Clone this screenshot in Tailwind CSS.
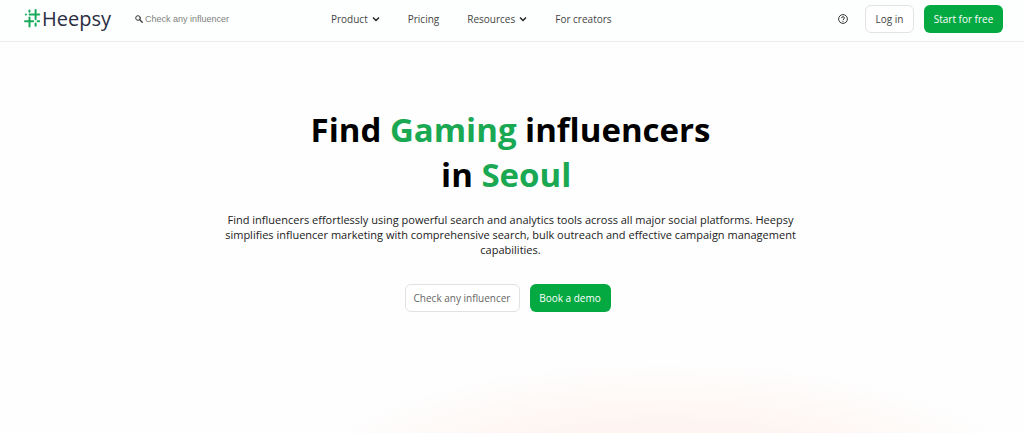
<!DOCTYPE html>
<html lang="en">
<head>
    <meta charset="utf-8">
    <meta name="viewport" content="width=device-width, initial-scale=1">
    <title>Find Gaming influencers in Seoul - Heepsy</title>
    <script src="https://cdn.jsdelivr.net/npm/@tailwindcss/browser@4"></script>
</head>
<body class="min-h-screen flex flex-col overflow-x-hidden bg-[#fefefe] font-['Open_Sans',sans-serif] text-[#444]">
    <!-- Header -->
    <header class="flex items-center h-[42px] pb-1 pl-6 pr-[21px] bg-[#fdfffe] border-b border-[#ececec] shadow-xs">
        <a href="#" class="flex items-center gap-px w-[87px] text-[20px] leading-6 text-[#2b2d42]">
            <svg class="w-[17px] h-5 shrink-0" viewBox="0 0 17 20" fill="none" stroke="#1aa95c" stroke-width="2" stroke-linecap="round" aria-hidden="true">
                <path d="M5.5 1.5v1.3M5.5 8.4v9.2M11.6 1v9.2M11.6 14.6v2.2"/>
                <path d="M1.8 5.6h.1M5.5 5.6h9.8M1 12.2h8.2M13.6 12.2h1.6"/>
            </svg>
            <span>Heepsy</span>
        </a>
        <label class="flex items-center gap-0.5 ml-6 w-[196px]">
            <svg class="w-2 h-2 shrink-0" viewBox="0 0 8 8" fill="none" stroke="#333" stroke-linecap="round" aria-hidden="true">
                <circle cx="3" cy="3" r="2.3"/>
                <path d="M4.8 4.8l2.4 2.4" stroke-width="1.3"/>
            </svg>
            <input type="text" aria-label="Check any influencer" placeholder="Check any influencer" class="w-full bg-transparent outline-none font-['Liberation_Sans',sans-serif] text-[9px] leading-4 placeholder:text-[#808080]">
        </label>
        <nav class="flex items-center gap-7 text-[10px] leading-4 whitespace-nowrap">
            <button type="button" class="flex items-center gap-1">
                Product
                <svg class="w-2 h-2" viewBox="0 0 8 8" fill="none" stroke="#222" stroke-width="1.5" aria-hidden="true"><path d="M1 2.5l3 3 3-3"/></svg>
            </button>
            <a href="#">Pricing</a>
            <button type="button" class="flex items-center gap-1">
                Resources
                <svg class="w-2 h-2" viewBox="0 0 8 8" fill="none" stroke="#222" stroke-width="1.5" aria-hidden="true"><path d="M1 2.5l3 3 3-3"/></svg>
            </button>
            <a href="#">For creators</a>
        </nav>
        <div class="flex items-center ml-auto text-[10px] leading-4 whitespace-nowrap">
            <button type="button" aria-label="Help" class="mr-[17px]">
                <svg class="w-[10px] h-[10px]" viewBox="0 0 10 10" fill="none" stroke="#333" aria-hidden="true">
                    <circle cx="5" cy="5" r="4.4"/>
                    <path d="M3.6 4.1c0-1.9 2.8-1.9 2.8 0 0 .9-1.4 1-1.4 2"/>
                    <path d="M5 6.9v1"/>
                </svg>
            </button>
            <a href="#" class="flex items-center justify-center h-7 w-[49px] mr-[10px] rounded-md border border-[#e2e4e3] bg-white">Log in</a>
            <a href="#" class="flex items-center justify-center h-7 w-[79px] rounded-md bg-[#04a942] text-white">Start for free</a>
        </div>
    </header>

    <!-- Hero -->
    <main class="flex-1 flex flex-col items-center pt-[65px] pr-[3px] bg-[radial-gradient(ellipse_390px_150px_at_65%_120%,#fde5dc_0%,#fef4f0_55%,#fefefe_100%)]">
        <h1 class="text-center text-[33px] leading-[45px] font-bold text-black">
            Find <span class="text-[#1aa853]">Gaming</span> influencers<br>
            in <span class="text-[#1aa853]">Seoul</span>&nbsp;
        </h1>
        <p class="mt-[15px] max-w-[580px] text-center text-[11px] leading-[15px] text-[#222]">
            Find influencers effortlessly using powerful search and analytics tools across all major social platforms. Heepsy simplifies influencer marketing with comprehensive search, bulk outreach and effective campaign management capabilities.
        </p>
        <div class="flex gap-[10px] mt-[27px] mr-[6px] text-[10px] leading-4">
            <a href="#" class="flex items-center justify-center h-7 w-[115px] rounded-md border border-[#e2e2e2] bg-white text-[#666]">Check any influencer</a>
            <a href="#" class="flex items-center justify-center h-7 w-[81px] rounded-md bg-[#04a942] text-white">Book a demo</a>
        </div>
    </main>
</body>
</html>
